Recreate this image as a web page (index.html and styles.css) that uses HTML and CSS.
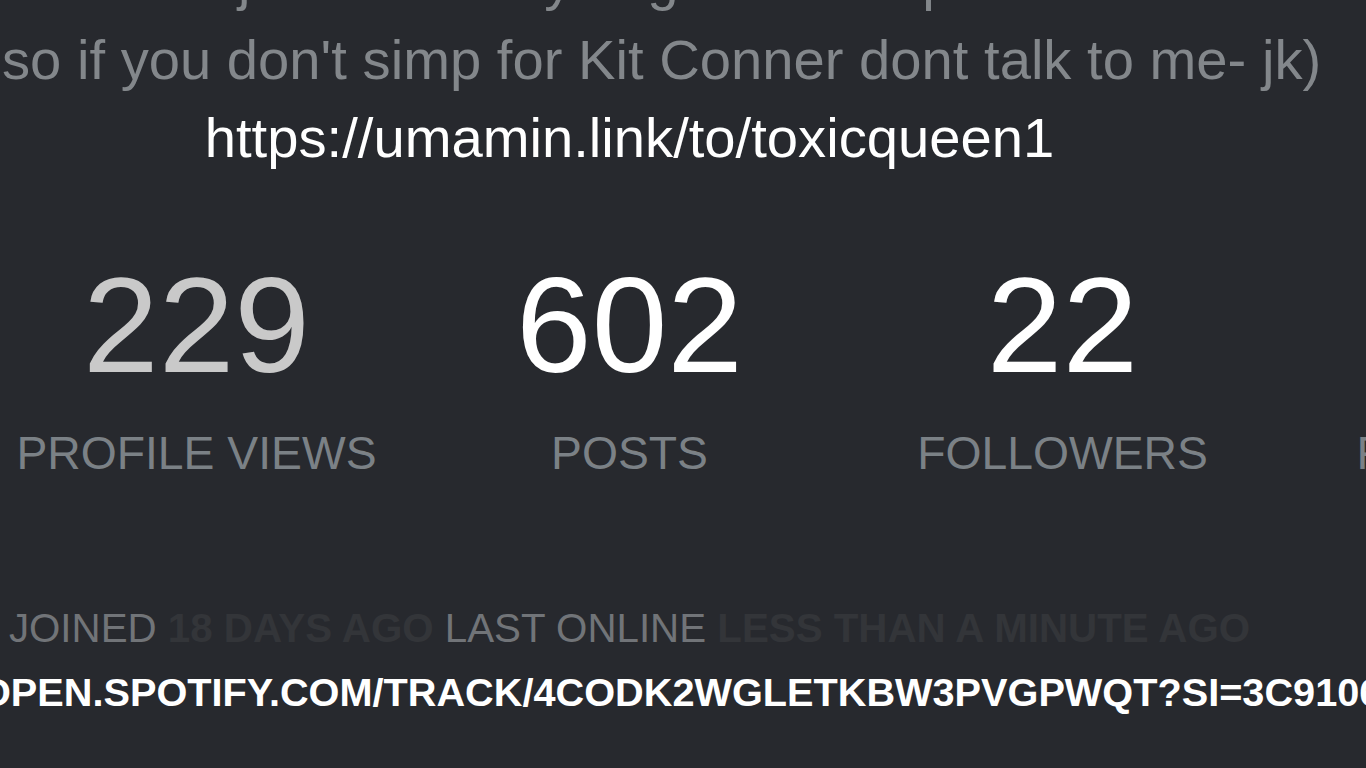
FILE: index.html
```html
<!DOCTYPE html>
<html lang="en">
<head>
<meta charset="utf-8">
<title>toxicqueen1</title>
<link rel="stylesheet" href="styles.css">
</head>
<body>
<main class="page">
  <p class="bio">
    <span class="bio-line bio-first">i joined 18 days ago at a simp</span>
    <span class="bio-line">so if you don't simp for Kit Conner dont talk to me- jk)</span>
  </p>
  <a class="url" href="#">https://umamin.link/to/toxicqueen1</a>

  <section class="stats">
    <div class="stat">
      <div class="stat-num muted">229</div>
      <div class="stat-label">Profile views</div>
    </div>
    <div class="stat">
      <div class="stat-num">602</div>
      <div class="stat-label">Posts</div>
    </div>
    <div class="stat">
      <div class="stat-num">22</div>
      <div class="stat-label">Followers</div>
    </div>
    <div class="stat">
      <div class="stat-num">19</div>
      <div class="stat-label">Following</div>
    </div>
  </section>

  <p class="meta">Joined <b>18 days ago</b> Last online <b>less than a minute ago</b></p>
  <a class="spotify" href="#">open.spotify.com/track/4codk2wgletkbw3pvgpwqt?si=3c9106e4d1b54a7f</a>
</main>
</body>
</html>
```

FILE: styles.css
```css
html {
  overflow: hidden;
}

body {
  margin: 0;
  background: #27292e;
  font-family: "Liberation Sans", Arial, sans-serif;
  overflow: hidden;
}

.page {
  width: 1299px;
  margin-left: -20px;
}

.bio {
  margin: -60px 0 0 0;
  padding-left: 22px;
  font-size: 56.2px;
  line-height: 80px;
  color: #83878b;
  white-space: nowrap;
}

.bio-line {
  display: block;
}

.bio-first {
  padding-left: 208px;
}

.url {
  display: block;
  text-align: center;
  font-size: 56.2px;
  line-height: 76px;
  color: #ffffff;
  text-decoration: none;
}

.stats {
  display: grid;
  grid-template-columns: repeat(4, 433px);
  margin-top: 74px;
  text-align: center;
}

.stat-num {
  font-size: 136px;
  line-height: 150px;
  color: #ffffff;
}

.stat-num.muted {
  color: #c9c9c9;
}

.stat-label {
  margin-top: 23px;
  font-size: 46.3px;
  line-height: 60px;
  color: #7b8186;
  text-transform: uppercase;
}

.meta {
  margin: 121px 0 0 0;
  text-align: center;
  font-size: 40.3px;
  line-height: 50px;
  color: #717478;
  text-transform: uppercase;
  white-space: nowrap;
}

.meta b {
  color: #333539;
}

.spotify {
  display: block;
  margin-top: 13px;
  font-size: 39.7px;
  line-height: 50px;
  font-weight: bold;
  color: #ffffff;
  text-decoration: none;
  text-transform: uppercase;
  white-space: nowrap;
}
```
